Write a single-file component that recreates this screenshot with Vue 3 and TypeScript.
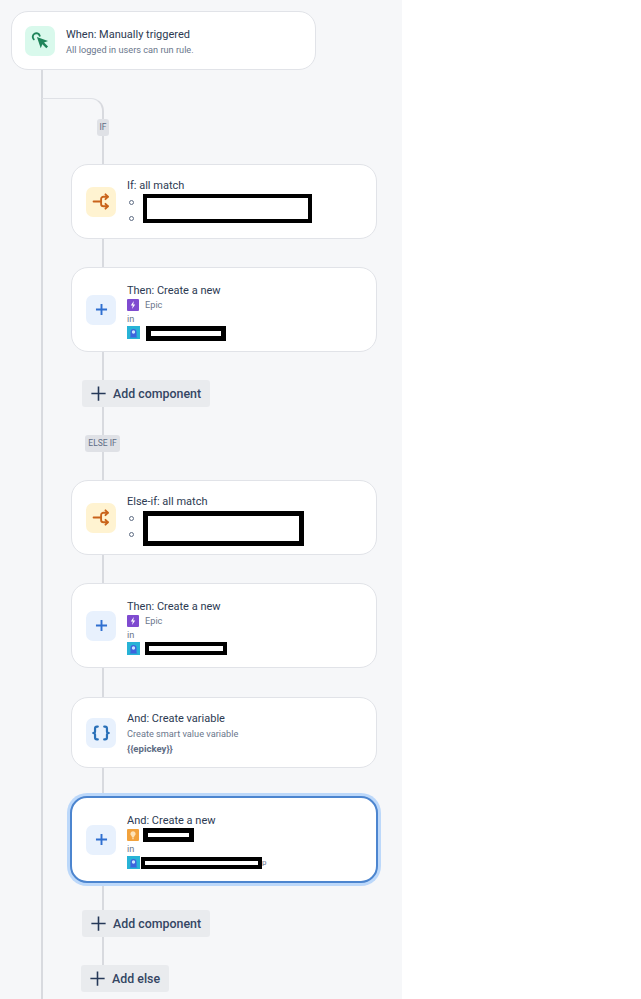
<script setup lang="ts">
const plus = 'M12 5v14M5 12h14'
</script>

<template>
  <div class="page">
    <div class="rule">
      <div class="card trigger">
        <div class="tile green">
          <svg viewBox="0 0 24 24" width="19" height="19" fill="none">
            <path d="M3.500 10.500a4.500 4.500 0 1 1 7.500-4.500" stroke="#1f845a" stroke-width="2.400" stroke-linecap="round" />
            <path d="M7.500 7.500l14 5-5 2 5 5-2.200 2.200-5-5-2 5z" fill="#1f845a" />
          </svg>
        </div>
        <div class="body trigger-body">
          <div class="title">When: Manually triggered</div>
          <div class="sub">All logged in users can run rule.</div>
        </div>
      </div>

      <div class="branch">
        <div class="tag tag-if">IF</div>

        <div class="card cond">
          <div class="tile yellow">
            <svg viewBox="0 0 24 24" width="19" height="19" fill="none" stroke="#c9631a" stroke-width="2.400" stroke-linecap="round" stroke-linejoin="round">
              <path d="M2 12h9M20 6h-5.500a3 3 0 0 0-3 3v6a3 3 0 0 0 3 3H20" />
              <path d="M17 3l3 3-3 3M17 15l3 3-3 3" />
            </svg>
          </div>
          <div class="body">
            <div class="title">If: all match</div>
            <ul class="bullets">
              <li></li>
              <li></li>
              <span class="redact redact-if"></span>
            </ul>
          </div>
        </div>

        <div class="card create">
          <div class="tile blue">
            <svg viewBox="0 0 24 24" width="19" height="19" fill="none" stroke="#2f6fd0" stroke-width="2.400"><path :d="plus" /></svg>
          </div>
          <div class="body shifted">
            <div class="title">Then: Create a new</div>
            <div class="row">
              <span class="issue purple">
                <svg viewBox="0 0 12 12" width="12" height="12"><path d="M6.800 2L3.800 6.500h2L5 10l3.200-4.600H6.200z" fill="#fff" /></svg>
              </span>
              <span class="small">Epic</span>
            </div>
            <div class="small in">in</div>
            <div class="row">
              <span class="project">
                <svg viewBox="0 0 13 13" width="13" height="13"><path d="M2.500 11.500l1-1V6a3 3 0 0 1 6 0v4.500l1 1z" fill="#3d63dd" /><circle cx="6.500" cy="6" r="1.700" fill="#c9e4ff" /></svg>
              </span>
              <span class="redact redact-p1"></span>
            </div>
          </div>
        </div>

        <button class="add add-comp">
          <svg viewBox="0 0 24 24" width="19" height="19" fill="none" stroke="#253858" stroke-width="2"><path d="M12 3v18M3 12h18" /></svg>
          Add component
        </button>

        <div class="tag tag-else">ELSE IF</div>

        <div class="card cond">
          <div class="tile yellow">
            <svg viewBox="0 0 24 24" width="19" height="19" fill="none" stroke="#c9631a" stroke-width="2.400" stroke-linecap="round" stroke-linejoin="round">
              <path d="M2 12h9M20 6h-5.500a3 3 0 0 0-3 3v6a3 3 0 0 0 3 3H20" />
              <path d="M17 3l3 3-3 3M17 15l3 3-3 3" />
            </svg>
          </div>
          <div class="body">
            <div class="title">Else-if: all match</div>
            <ul class="bullets">
              <li></li>
              <li></li>
              <span class="redact redact-else"></span>
            </ul>
          </div>
        </div>

        <div class="card create">
          <div class="tile blue">
            <svg viewBox="0 0 24 24" width="19" height="19" fill="none" stroke="#2f6fd0" stroke-width="2.400"><path :d="plus" /></svg>
          </div>
          <div class="body shifted">
            <div class="title">Then: Create a new</div>
            <div class="row">
              <span class="issue purple">
                <svg viewBox="0 0 12 12" width="12" height="12"><path d="M6.800 2L3.800 6.500h2L5 10l3.200-4.600H6.200z" fill="#fff" /></svg>
              </span>
              <span class="small">Epic</span>
            </div>
            <div class="small in">in</div>
            <div class="row">
              <span class="project">
                <svg viewBox="0 0 13 13" width="13" height="13"><path d="M2.500 11.500l1-1V6a3 3 0 0 1 6 0v4.500l1 1z" fill="#3d63dd" /><circle cx="6.500" cy="6" r="1.700" fill="#c9e4ff" /></svg>
              </span>
              <span class="redact redact-p2"></span>
            </div>
          </div>
        </div>

        <div class="card variable">
          <div class="tile blue">
            <svg viewBox="0 0 24 24" width="22" height="22" fill="none" stroke="#2a70b8" stroke-width="2.400" stroke-linecap="round" stroke-linejoin="round">
              <path d="M8.500 5H7.500a2 2 0 0 0-2 2v3a2 2 0 0 1-2 2 2 2 0 0 1 2 2v3a2 2 0 0 0 2 2h1" />
              <path d="M15.500 5h1a2 2 0 0 1 2 2v3a2 2 0 0 0 2 2 2 2 0 0 0-2 2v3a2 2 0 0 1-2 2h-1" />
            </svg>
          </div>
          <div class="body var-body">
            <div class="title">And: Create variable</div>
            <div class="sub">Create smart value variable</div>
            <div class="sub strong">&#123;&#123;epickey&#125;&#125;</div>
          </div>
        </div>

        <div class="card create selected">
          <div class="tile blue">
            <svg viewBox="0 0 24 24" width="19" height="19" fill="none" stroke="#2f6fd0" stroke-width="2.400"><path :d="plus" /></svg>
          </div>
          <div class="body shifted">
            <div class="title">And: Create a new</div>
            <div class="row">
              <span class="issue orange">
                <svg viewBox="0 0 12 12" width="12" height="12"><path d="M6 2.200a2.600 2.600 0 0 0-1.400 4.800L5 8.500h2L7.400 7A2.600 2.600 0 0 0 6 2.200z" fill="#fde3b8" /><path d="M5.200 9.700h1.600" stroke="#fde3b8" /></svg>
              </span>
              <span class="redact redact-i"></span>
            </div>
            <div class="small in">in</div>
            <div class="row">
              <span class="project">
                <svg viewBox="0 0 13 13" width="13" height="13"><path d="M2.500 11.500l1-1V6a3 3 0 0 1 6 0v4.500l1 1z" fill="#3d63dd" /><circle cx="6.500" cy="6" r="1.700" fill="#c9e4ff" /></svg>
              </span>
              <span class="redact redact-p3"></span>
              <span class="small tail">p</span>
            </div>
          </div>
        </div>

        <button class="add add-comp add-last">
          <svg viewBox="0 0 24 24" width="19" height="19" fill="none" stroke="#253858" stroke-width="2"><path d="M12 3v18M3 12h18" /></svg>
          Add component
        </button>

        <button class="add add-else">
          <svg viewBox="0 0 24 24" width="19" height="19" fill="none" stroke="#253858" stroke-width="2"><path d="M12 3v18M3 12h18" /></svg>
          Add else
        </button>
      </div>
    </div>
  </div>
</template>

<style>
body {
  background: #fff;
}
</style>

<style scoped>
.page {
  height: 999px;
  overflow: hidden;
  font-family: Roboto, "Liberation Sans", sans-serif;
  color: #253858;
}

.rule {
  position: relative;
  width: 402px;
  height: 999px;
  box-sizing: border-box;
  padding: 11px 0 0 11px;
  background: #f6f7f9;
}

/* main trunk under the trigger */
.rule::before {
  content: "";
  position: absolute;
  left: 41px;
  top: 70px;
  bottom: 0;
  width: 2px;
  background: #d8dadf;
}

.branch {
  position: relative;
  margin-top: 28px;
  padding: 21px 0 0 60px;
  display: flex;
  flex-direction: column;
  align-items: flex-start;
  gap: 28px;
}

/* elbow going right then down through the branch */
.branch::before {
  content: "";
  position: absolute;
  left: 31px;
  top: 0;
  width: 60px;
  height: 868px;
  border-top: 1px solid #dfe1e6;
  border-right: 2px solid #d8dadf;
  border-top-right-radius: 13px;
}

.card {
  position: relative;
  box-sizing: border-box;
  width: 306px;
  display: flex;
  align-items: center;
  gap: 11px;
  padding: 0 14px;
  background: #fff;
  border: 1px solid #e1e3e8;
  border-radius: 17px;
}

.trigger {
  width: 305px;
  height: 59px;
  padding-left: 13px;
}

.cond {
  height: 75px;
}

.create {
  height: 85px;
}

.variable {
  height: 71px;
  margin-top: 1px;
}

.selected {
  width: 308px;
  height: 87px;
  margin-left: -1px;
  border: 2px solid #4c85cf;
  box-shadow: 0 0 0 3px #bcd8fa;
}

.tile {
  flex: none;
  width: 30px;
  height: 30px;
  border-radius: 7px;
  display: flex;
  align-items: center;
  justify-content: center;
}

.green {
  background: #d9f9ec;
}

.yellow {
  background: #fff3d1;
}

.blue {
  background: #e8f1fd;
}

.body {
  min-width: 0;
}

.trigger-body {
  margin-top: 2px;
}

.shifted {
  margin-top: 3px;
}

.var-body {
  margin-top: 2px;
}

.title {
  font-size: 11px;
  line-height: 15px;
  color: #2c3a52;
}

.sub {
  font-size: 9.200px;
  line-height: 15px;
  color: #6b778c;
}

.strong {
  font-size: 9.600px;
  font-weight: 700;
  color: #5e6c84;
}

.bullets {
  position: relative;
  box-sizing: border-box;
  display: flex;
  flex-direction: column;
  gap: 11px;
  width: 200px;
  height: 32px;
  margin: 0;
  padding: 6.500px 0 0 2px;
  list-style: none;
}

.bullets li {
  box-sizing: border-box;
  width: 5px;
  height: 5px;
  border: 1px solid #5e6c84;
  border-radius: 50%;
}

.row {
  display: flex;
  align-items: center;
  gap: 6px;
  height: 14px;
}

.small {
  font-size: 9.200px;
  line-height: 14px;
  color: #6b778c;
}

.in {
  height: 14px;
}

.issue {
  flex: none;
  width: 12px;
  height: 12px;
  border-radius: 1px;
  display: block;
}

.issue svg,
.project svg {
  display: block;
}

.purple {
  background: #7f4bd0;
}

.orange {
  background: #f2a23c;
}

.project {
  flex: none;
  width: 13px;
  height: 13px;
  background: #27b3d6;
}

.redact {
  display: block;
  flex: none;
  box-sizing: border-box;
  background: #fff;
  border: 5px solid #000;
}

.redact-if,
.redact-else {
  position: absolute;
  left: 16px;
}

.redact-if {
  top: 1px;
  width: 169px;
  height: 29px;
  border-width: 4.500px;
}

.redact-else {
  top: 2px;
  width: 161px;
  height: 35px;
}

.redact-p1 {
  width: 80px;
  height: 15px;
  margin: 1px 0 0 0;
}

.redact-p2 {
  width: 82px;
  height: 13px;
  margin-left: -1px;
  border-width: 4.500px;
}

.redact-i {
  width: 51px;
  height: 14px;
  margin-left: -2px;
  border-width: 5px;
}

.redact-p3 {
  width: 121px;
  height: 12px;
  margin-left: -5px;
  border-width: 4.500px;
}

.tail {
  margin-left: -6px;
  font-size: 8px;
}

.add {
  position: relative;
  display: flex;
  align-items: center;
  gap: 5.500px;
  box-sizing: border-box;
  height: 27px;
  padding: 0 0 0 6.500px;
  border: 0;
  border-radius: 3px;
  background: #e9ebee;
  font-family: inherit;
  font-size: 12.400px;
  font-weight: 500;
  white-space: nowrap;
  color: #344563;
}

.add svg {
  flex: none;
}

.add-comp {
  margin-left: 11px;
  width: 128px;
}

.add-last {
  margin-top: -1px;
}

.add-else {
  margin-left: 10px;
  width: 88px;
}

.tag {
  position: relative;
  box-sizing: border-box;
  height: 17px;
  border-radius: 3px;
  background: #dfe1e6;
  font-size: 8.500px;
  line-height: 17px;
  text-align: center;
  color: #5e6c84;
}

.tag-if {
  margin-left: 26px;
  width: 12px;
}

.tag-else {
  margin-left: 14px;
  width: 35px;
}
</style>
